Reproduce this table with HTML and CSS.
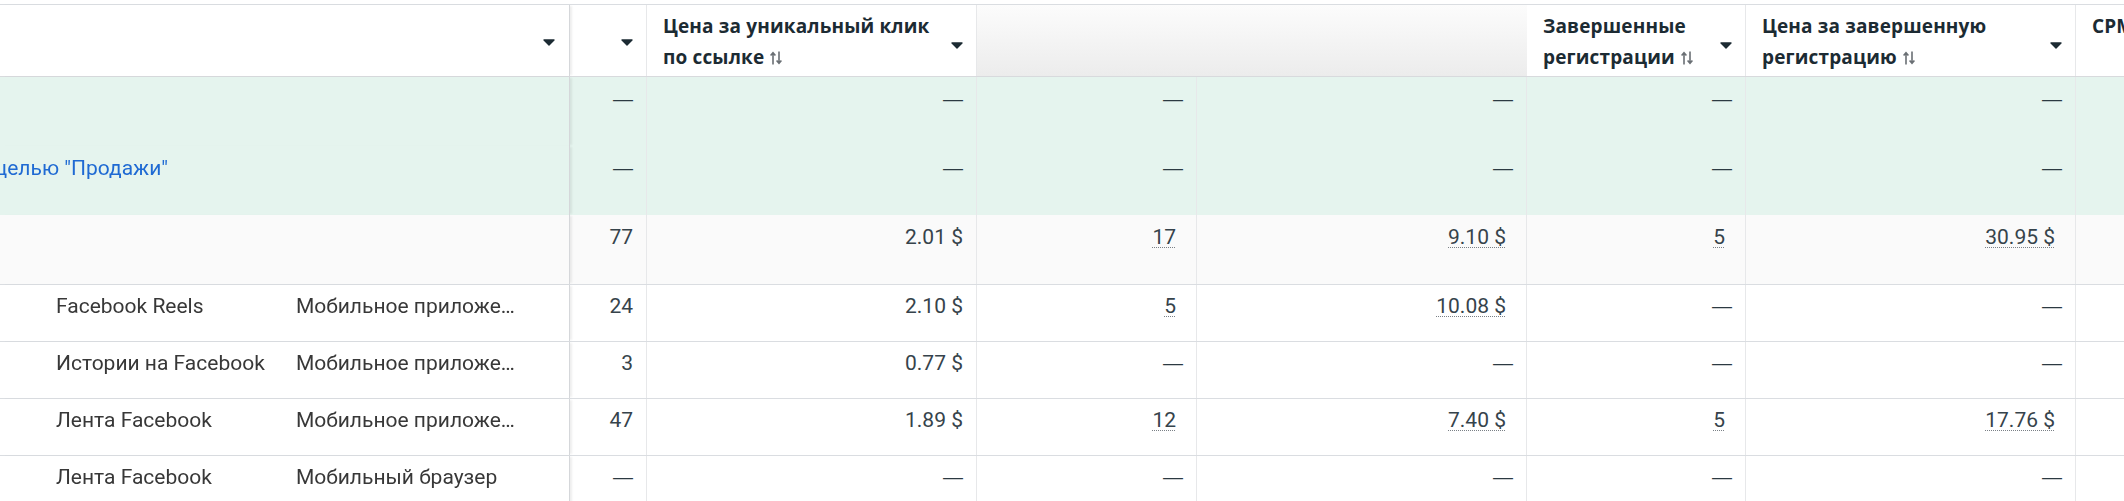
FILE: index.html
```html
<!DOCTYPE html>
<html lang="ru">
<head>
<meta charset="utf-8">
<title>Отчет</title>
<link rel="stylesheet" href="styles.css">
</head>
<body>
<div class="viewport">
  <div class="table">
    <div class="row head">
      <div class="cell frozen">
        <div class="fz-lead"></div>
        <div class="fz-a"></div>
        <div class="fz-b fz-bhead"><svg class="caret caret-hi" width="12" height="7" viewBox="0 0 12 7"><path d="M1 1h10L6 6z" fill="#1c2b33" stroke="#1c2b33" stroke-width="1.4" stroke-linejoin="round"/></svg></div>
      </div>
      <div class="cell hcell"><span class="hl"></span><svg class="caret caret-hi" width="12" height="7" viewBox="0 0 12 7"><path d="M1 1h10L6 6z" fill="#1c2b33" stroke="#1c2b33" stroke-width="1.4" stroke-linejoin="round"/></svg></div>
      <div class="cell hcell"><span class="hl">Цена за уникальный клик по ссылке <svg class="sort" width="12" height="14" viewBox="0 0 12 14"><path d="M3 13.5V2M0.6 4.6L3 1.8 5.4 4.6M9 0.5V12M6.6 9.4L9 12.2l2.4-2.8" fill="none" stroke="#6a6f74" stroke-width="1.6"/></svg></span><svg class="caret" width="12" height="7" viewBox="0 0 12 7"><path d="M1 1h10L6 6z" fill="#1c2b33" stroke="#1c2b33" stroke-width="1.4" stroke-linejoin="round"/></svg></div>
      <div class="cell hgap"></div>
      <div class="cell hcell"><span class="hl">Завершенные регистрации <svg class="sort" width="12" height="14" viewBox="0 0 12 14"><path d="M3 13.5V2M0.6 4.6L3 1.8 5.4 4.6M9 0.5V12M6.6 9.4L9 12.2l2.4-2.8" fill="none" stroke="#6a6f74" stroke-width="1.6"/></svg></span><svg class="caret" width="12" height="7" viewBox="0 0 12 7"><path d="M1 1h10L6 6z" fill="#1c2b33" stroke="#1c2b33" stroke-width="1.4" stroke-linejoin="round"/></svg></div>
      <div class="cell hcell"><span class="hl">Цена за завершенную регистрацию <svg class="sort" width="12" height="14" viewBox="0 0 12 14"><path d="M3 13.5V2M0.6 4.6L3 1.8 5.4 4.6M9 0.5V12M6.6 9.4L9 12.2l2.4-2.8" fill="none" stroke="#6a6f74" stroke-width="1.6"/></svg></span><svg class="caret" width="12" height="7" viewBox="0 0 12 7"><path d="M1 1h10L6 6z" fill="#1c2b33" stroke="#1c2b33" stroke-width="1.4" stroke-linejoin="round"/></svg></div>
      <div class="cell hcell"><span class="hl">CPM (цена за 1 000 показов) <svg class="sort" width="12" height="14" viewBox="0 0 12 14"><path d="M3 13.5V2M0.6 4.6L3 1.8 5.4 4.6M9 0.5V12M6.6 9.4L9 12.2l2.4-2.8" fill="none" stroke="#6a6f74" stroke-width="1.6"/></svg></span></div>
    </div>

    <div class="group">
      <div class="row tall">
        <div class="cell frozen"><div class="fz-lead"></div><div class="fz-a"></div><div class="fz-b"></div></div>
        <div class="cell num"><span class="dash">—</span></div>
        <div class="cell num"><span class="dash">—</span></div>
        <div class="cell num"><span class="dash">—</span></div>
        <div class="cell num"><span class="dash">—</span></div>
        <div class="cell num"><span class="dash">—</span></div>
        <div class="cell num"><span class="dash">—</span></div>
        <div class="cell num"><span class="dash">—</span></div>
      </div>
      <div class="row tall">
        <div class="cell frozen"><div class="fz-link"><a class="camp">Кампания с целью "Продажи"</a></div><div class="fz-b"></div></div>
        <div class="cell num"><span class="dash">—</span></div>
        <div class="cell num"><span class="dash">—</span></div>
        <div class="cell num"><span class="dash">—</span></div>
        <div class="cell num"><span class="dash">—</span></div>
        <div class="cell num"><span class="dash">—</span></div>
        <div class="cell num"><span class="dash">—</span></div>
        <div class="cell num"><span class="dash">—</span></div>
      </div>
    </div>

    <div class="row tall total">
      <div class="cell frozen"><div class="fz-lead"></div><div class="fz-a"></div><div class="fz-b"></div></div>
      <div class="cell num">77</div>
      <div class="cell num">2.01 $</div>
      <div class="cell num"><span class="lnk">17</span></div>
      <div class="cell num"><span class="lnk">9.10 $</span></div>
      <div class="cell num"><span class="lnk">5</span></div>
      <div class="cell num"><span class="lnk">30.95 $</span></div>
      <div class="cell num"><span class="lnk">6.19 $</span></div>
    </div>

    <div class="row data">
      <div class="cell frozen"><div class="fz-lead"></div><div class="fz-a">Facebook Reels</div><div class="fz-b">Мобильное приложение</div></div>
      <div class="cell num">24</div>
      <div class="cell num">2.10 $</div>
      <div class="cell num"><span class="lnk">5</span></div>
      <div class="cell num"><span class="lnk">10.08 $</span></div>
      <div class="cell num"><span class="dash">—</span></div>
      <div class="cell num"><span class="dash">—</span></div>
      <div class="cell num"><span class="dash">—</span></div>
    </div>
    <div class="row data">
      <div class="cell frozen"><div class="fz-lead"></div><div class="fz-a">Истории на Facebook</div><div class="fz-b">Мобильное приложение</div></div>
      <div class="cell num">3</div>
      <div class="cell num">0.77 $</div>
      <div class="cell num"><span class="dash">—</span></div>
      <div class="cell num"><span class="dash">—</span></div>
      <div class="cell num"><span class="dash">—</span></div>
      <div class="cell num"><span class="dash">—</span></div>
      <div class="cell num"><span class="dash">—</span></div>
    </div>
    <div class="row data">
      <div class="cell frozen"><div class="fz-lead"></div><div class="fz-a">Лента Facebook</div><div class="fz-b">Мобильное приложение</div></div>
      <div class="cell num">47</div>
      <div class="cell num">1.89 $</div>
      <div class="cell num"><span class="lnk">12</span></div>
      <div class="cell num"><span class="lnk">7.40 $</span></div>
      <div class="cell num"><span class="lnk">5</span></div>
      <div class="cell num"><span class="lnk">17.76 $</span></div>
      <div class="cell num"><span class="dash">—</span></div>
    </div>
    <div class="row data">
      <div class="cell frozen"><div class="fz-lead"></div><div class="fz-a">Лента Facebook</div><div class="fz-b">Мобильный браузер</div></div>
      <div class="cell num"><span class="dash">—</span></div>
      <div class="cell num"><span class="dash">—</span></div>
      <div class="cell num"><span class="dash">—</span></div>
      <div class="cell num"><span class="dash">—</span></div>
      <div class="cell num"><span class="dash">—</span></div>
      <div class="cell num"><span class="dash">—</span></div>
      <div class="cell num"><span class="dash">—</span></div>
    </div>
  </div>
</div>
</body>
</html>
```

FILE: styles.css
```css
html, body {
  margin: 0;
  background: #ffffff;
}
body {
  padding-top: 4px;
  overflow: hidden;
  font-family: Roboto, "Noto Sans", sans-serif;
  font-size: 21px;
  color: #36434b;
}
.viewport {
  width: 2124px;
  height: 497px;
  overflow: hidden;
}
.table {
  width: 2406px;
  border-top: 1px solid #dadde1;
}
.row {
  display: grid;
  grid-template-columns: 570px 77px 330px 220px 330px 219px 330px 330px;
  box-sizing: border-box;
}
.cell {
  box-sizing: border-box;
  border-right: 1px solid #e7e8ea;
  min-width: 0;
}

/* frozen left part */
.frozen {
  position: sticky;
  left: 0;
  z-index: 1;
  display: flex;
  border-right: 1px solid #d5d7da;
  box-shadow: 3px 0 2px -1px rgba(0, 0, 0, 0.07);
  color: #383838;
}
.fz-lead {
  width: 40px;
  flex-shrink: 0;
}
.fz-a {
  width: 240px;
  flex-shrink: 0;
  box-sizing: border-box;
  padding: 9px 0 0 16px;
  line-height: 24px;
  white-space: nowrap;
  overflow: hidden;
}
.fz-b {
  flex: 1;
  min-width: 0;
  box-sizing: border-box;
  padding: 9px 52px 0 16px;
  line-height: 24px;
  white-space: nowrap;
  overflow: hidden;
  text-overflow: ellipsis;
}
.fz-link {
  width: 280px;
  flex-shrink: 0;
  box-sizing: border-box;
  display: flex;
  justify-content: flex-end;
  overflow: hidden;
  padding: 10px 112px 0 0;
  line-height: 24px;
}
.camp {
  flex-shrink: 0;
  white-space: nowrap;
  color: #1f6ad3;
  cursor: pointer;
}

/* header */
.head {
  height: 72px;
  border-bottom: 1px solid #d8dadd;
}
.head .frozen {
  background: #ffffff;
}
.fz-bhead {
  display: flex;
  justify-content: flex-end;
  padding: 6px 14px 0 16px;
}
.hcell {
  display: flex;
  align-items: flex-start;
  gap: 8px;
  padding: 6px 13px 0 16px;
  background: #ffffff;
  overflow: hidden;
}
.hl {
  flex: 1;
  min-width: 0;
  font-family: "Open Sans", "Noto Sans", sans-serif;
  font-weight: 700;
  font-size: 19px;
  letter-spacing: 0.15px;
  line-height: 31px;
  color: #1c2b33;
}
.sort {
  vertical-align: -1px;
  margin-left: 1px;
}
.caret {
  flex-shrink: 0;
  margin-left: auto;
  margin-top: 31px;
}
.caret-hi {
  margin-top: 28px;
}
.hgap {
  grid-column: span 2;
  border-right: none;
  background: linear-gradient(to bottom, #fcfcfc, #ececec);
}

/* body rows */
.tall {
  height: 69px;
}
.group {
  background: #e5f4ee;
}
.group .frozen {
  background: #e5f4ee;
}
.total {
  height: 70px;
  background: #fafafa;
  border-bottom: 1px solid #dadde1;
}
.total .frozen {
  background: #fafafa;
}
.data {
  height: 57px;
  background: #ffffff;
  border-bottom: 1px solid #dadde1;
}
.data .frozen {
  background: #ffffff;
}
.num {
  text-align: right;
  padding: 9px 13px 0 0;
  line-height: 24px;
  white-space: nowrap;
  overflow: hidden;
}
.tall .num {
  padding-top: 10px;
}
.dash {
  font-family: "Liberation Sans", Arial, sans-serif;
  font-size: 20px;
  color: #2c3a42;
}
.lnk {
  margin-right: 7px;
  text-decoration: underline dotted #7a8086;
  text-decoration-thickness: 1px;
  text-underline-offset: 3px;
}
```
